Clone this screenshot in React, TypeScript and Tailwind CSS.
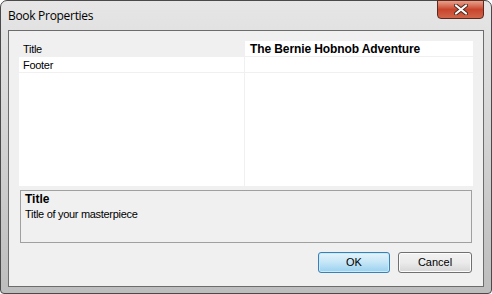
import React from "react";

export default function App() {
  const ui = { fontFamily: '"Liberation Sans", Arial, sans-serif' };
  return (
    <div className="w-[492px] h-[294px] overflow-hidden bg-white">
      <div className="relative w-[492px] h-[294px] rounded-t-[7px] rounded-b-[4px] border border-[#4a4a4a] bg-gradient-to-b from-[#e6e6e6] via-[#d2d2d2] to-[#bdbdbd] flex flex-col px-[7px] pb-[6px]">
        <div className="h-[29px] flex items-center pl-[0px] pt-[1px]">
          <span className="text-[12px] tracking-[-0.3px] text-black" style={{ fontFamily: '"Open Sans", "Noto Sans", sans-serif' }}>
            Book Properties
          </span>
        </div>
        <div className="absolute top-[-1px] right-[7px] w-[47px] h-[19px] rounded-b-[4px] border border-[#5a2a20] bg-gradient-to-b from-[#e8a08c] via-[#c8442c] to-[#d0654a] flex items-center justify-center">
          <svg width="14" height="11" viewBox="0 0 14 11">
            <path d="M2 1.5 L12 9.5 M12 1.5 L2 9.5" stroke="#4a2a20" strokeWidth="4" strokeLinecap="round" />
            <path d="M2 1.5 L12 9.5 M12 1.5 L2 9.5" stroke="#ffffff" strokeWidth="2.2" strokeLinecap="round" />
          </svg>
        </div>
        <div className="flex-1 border border-[#6c6c6c] bg-[#f0f0f0] flex flex-col px-[10px] pt-[10px]" style={ui}>
          <div className="h-[145px] bg-white flex text-[11px] tracking-[-0.3px] text-black">
            <div className="w-[226px] border-r border-[#f0f0f0] flex flex-col">
              <div className="h-[16px] bg-[#f0f0f0] border-b border-[#f0f0f0] pl-[4px] leading-[16px]">Title</div>
              <div className="h-[16px] border-b border-[#f0f0f0] pl-[4px] leading-[16px]">Footer</div>
            </div>
            <div className="flex-1 flex flex-col">
              <div className="h-[16px] border-b border-[#f0f0f0] pl-[5px] leading-[16px] font-bold text-[12px] tracking-[-0.1px]">The Bernie Hobnob Adventure</div>
              <div className="h-[16px] border-b border-[#f0f0f0]"></div>
            </div>
          </div>
          <div className="mt-[4px] mx-[1px] h-[53px] border border-[#a0a0a0] bg-[#f0f0f0] px-[4px] pt-[1px] text-[11px] tracking-[-0.3px] text-black">
            <div className="font-bold text-[12px] leading-[14px] tracking-[0px]">Title</div>
            <div className="leading-[14px] mt-[1px]">Title of your masterpiece</div>
          </div>
          <div className="flex justify-end gap-[8px] mt-[9px] mr-[1px]">
            <button className="w-[72px] h-[21px] rounded-[3px] border border-[#3c7fb1] bg-gradient-to-b from-[#e5f4fc] via-[#c4e5f6] to-[#98d1ef] text-[11px] text-black shadow-[inset_0_0_0_1px_#c7eaff]">
              OK
            </button>
            <button className="w-[74px] h-[21px] rounded-[3px] border border-[#707070] bg-gradient-to-b from-[#f2f2f2] via-[#ebebeb] to-[#d6d6d6] text-[11px] text-black shadow-[inset_0_0_0_1px_#fcfcfc]">
              Cancel
            </button>
          </div>
        </div>
      </div>
    </div>
  );
}
